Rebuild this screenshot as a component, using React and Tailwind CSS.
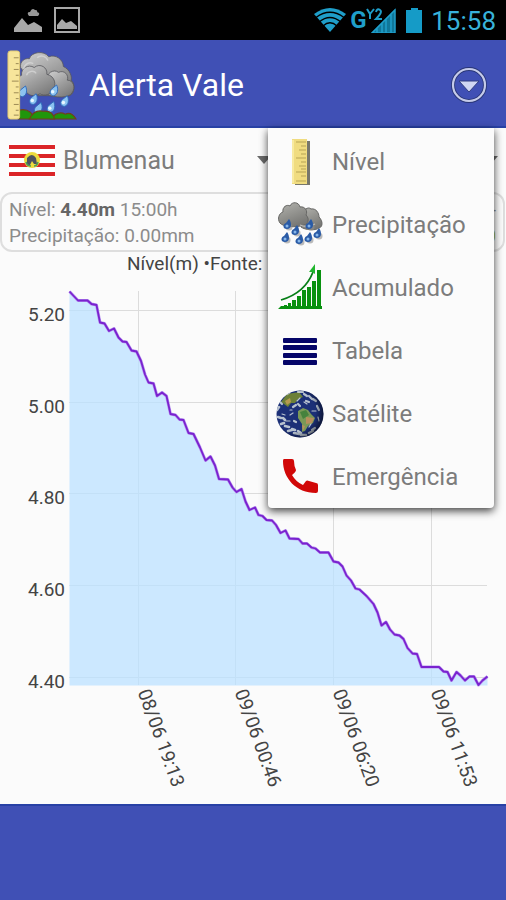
import React from 'react';

const LEVELS = [
  [69.5, 291.5], [78, 300.5], [87.5, 300.5], [91.5, 304], [96.5, 305], [100, 322.5], [104.5, 323.5], [109, 331],
  [114, 328.5], [118.5, 337.5], [122.5, 341.5], [126.5, 342], [131.5, 350.5], [136.5, 351.5], [141, 361],
  [145, 374.5], [148.5, 382.5], [153.5, 383.5], [157, 396], [162, 392.5], [166.5, 396], [170.5, 414], [175.5, 415],
  [179.5, 419.5], [183.5, 420], [188.5, 433], [193.5, 434], [200, 447.5], [205.5, 460.5], [210.5, 456.5],
  [215, 465.5], [219, 479], [228, 479.5], [232.5, 487.5], [236.5, 492], [241.5, 489], [245.5, 501.5], [249.5, 510],
  [255, 507.5], [258.5, 515], [262.5, 516], [266.5, 520], [272, 520.5], [276, 525], [280.5, 533], [285.5, 530.5],
  [289.5, 538.5], [298.5, 539], [302.5, 543.5], [307, 543.5], [311.5, 547.5], [315.5, 548.5], [320, 552.5],
  [328.5, 552.5], [333.5, 561.5], [338.5, 562.5], [342.5, 566.5], [346.5, 575.5], [351, 580.5], [355.5, 588.5],
  [359.5, 589.5], [366.5, 596], [373.5, 604], [377.5, 612.5], [381.5, 625.5], [386, 622], [390, 629.5],
  [394.5, 634.5], [399.5, 635.5], [403.5, 639], [407.5, 648], [412.5, 653.5], [417, 654], [421.5, 667], [439, 667],
  [443.5, 671.5], [447.5, 672], [451.5, 680.5], [456.5, 672], [460.5, 675.5], [465, 680.5], [469.5, 676.5],
  [474, 676.5], [478.5, 685], [482.5, 680.5], [487.5, 676.5],
];

const Y_TICKS = [[310.5, '5.20'], [402.5, '5.00'], [493.5, '4.80'], [585.5, '4.60'], [677.5, '4.40']];
const X_TICKS = [[138.5, '08/06 19:13'], [235.5, '09/06 00:46'], [333.5, '09/06 06:20'], [431.5, '09/06 11:53']];

function LevelChart() {
  const line = LEVELS.map((p) => p.join(',')).join(' ');
  return (
    <svg viewBox="0 277 506 527" className="block w-full" role="img" aria-label="Nível(m)">
      <g stroke="#dcdcdc" strokeWidth="1">
        {Y_TICKS.map(([y]) => <line key={y} x1="69" x2="487" y1={y} y2={y} />)}
        {X_TICKS.map(([x]) => <line key={x} x1={x} x2={x} y1="291" y2="685" />)}
      </g>
      <polygon points={`69.5,685.5 ${line} 487.5,685.5`} fill="#cce8ff" />
      <g stroke="#c3e0f7" strokeWidth="1">
        {Y_TICKS.map(([y], i) => <line key={y} x1="70" x2={[98, 168, 242, 353, 450][i]} y1={y} y2={y} />)}
        {X_TICKS.map(([x], i) => <line key={x} x1={x} x2={x} y1={[358, 493, 563, 669][i]} y2="685" />)}
      </g>
      <polyline points={line} fill="none" stroke="#b794f0" strokeWidth="3" strokeLinejoin="round" />
      <polyline points={line} fill="none" stroke="#7a22cf" strokeWidth="1.8" strokeLinejoin="round" />
      <g fill="#444" fontSize="19" fontFamily="Roboto, sans-serif">
        {Y_TICKS.map(([y, t]) => <text key={t} x="65" y={y + 10} textAnchor="end">{t}</text>)}
        {X_TICKS.map(([x, t]) => (
          <text key={t} transform={`translate(${x - 1} 692) rotate(70)`}>{t}</text>
        ))}
      </g>
    </svg>
  );
}

const DROP = 'M3 -6C5 -2 4.500 4 0 5C-4.500 5 -4.500 0 -2 -2Z';

function StormLogo() {
  return (
    <svg viewBox="0 0 72 72" className="h-[70px] w-[70px] shrink-0" aria-hidden="true">
      <defs>
        <linearGradient id="logoCloud" x1="0" y1="0" x2="0.700" y2="1">
          <stop offset="0" stopColor="#d2d2d2" />
          <stop offset="0.550" stopColor="#a0a0a0" />
          <stop offset="1" stopColor="#7c7c7c" />
        </linearGradient>
      </defs>
      <g fill="url(#logoCloud)" stroke="#55555a" strokeWidth="0.800">
        <path d="M14 18C13 12 18 8 23 9C25 2 38 0 43 7C50 4 58 10 58 17C65 20 67 28 66 31C71 36 69 47 63 47H32Z" />
        <path d="M41 31C40 24 48 19 53 23C59 20 64 26 62 31C68 31 71 38 67 44C64 50 49 49 42 46Z" />
        <path d="M12 38C9 32 12 27 15 26C14 19 22 14 28 18C34 13 42 18 41 25C50 27 51 37 47 40C46 46 38 48 34 45C27 49 21 46 20 43C16 45 12 42 12 38Z" />
      </g>
      <path d="M17 20C18 14 23 12 27 14M31 8C35 4 41 7 42 11M20 26C22 21 28 21 30 24" fill="none" stroke="#e0e0e0" strokeWidth="1.500" opacity="0.600" />
      <g fill="#8cc2f0" stroke="#2f6bbb" strokeWidth="1">
        {[[16, 43], [27, 51], [48, 42], [45, 59], [59, 53], [32, 60]].map(([x, y]) => (
          <path key={`${x}-${y}`} d={DROP} transform={`translate(${x} ${y})`} />
        ))}
      </g>
      <g fill="#e8f6ff">
        {[[26, 52], [47, 43], [44, 60], [58, 54]].map(([x, y]) => <circle key={x} cx={x} cy={y} r="1.800" />)}
      </g>
      <g fill="#20960b" stroke="#70411b" strokeWidth="1.200">
        <path d="M12 62Q19 60 24 64L30 71H12Z" />
        <path d="M45 71Q52 62 60 66Q66 63 71 71Z" />
        <path d="M23 71Q28 61 37 63Q47 62 49 71Z" />
      </g>
      <rect x="1" y="1" width="12" height="70" rx="2.500" fill="#f7e59b" stroke="#e0c873" />
      <path d="M7 8h5M9 14h3M7 20h5M9 26h3M5 32h7M9 38h3M7 44h5M9 50h3M7 56h5M9 62h3M7 67h5" stroke="#9a8753" strokeWidth="1" />
    </svg>
  );
}

function RulerIcon() {
  return (
    <svg viewBox="0 0 48 48" className="h-12 w-12" aria-hidden="true">
      <rect x="19" y="3" width="15" height="44" fill="#77776c" />
      <rect x="16" y="1" width="15" height="45" fill="#f0dc80" />
      <path d="M17 2v43" stroke="#f8eaa0" strokeWidth="2" />
      <path d="M20 4h10M25 8h5M23 12h7M25 16h5M20 20h10M25 24h5M23 28h7M25 31h5M20 34h10M25 38h5M20 43h10" stroke="#b7a455" strokeWidth="1" />
    </svg>
  );
}

const RAIN_DROPS = [[11, 24], [19, 30], [33, 24], [9, 37], [23, 39], [32, 37], [41, 33]];

function RainIcon() {
  return (
    <svg viewBox="0 0 48 48" className="h-12 w-12" aria-hidden="true">
      <defs>
        <linearGradient id="rainCloud" x1="0" y1="0" x2="0.500" y2="1">
          <stop offset="0" stopColor="#b3b3ae" />
          <stop offset="1" stopColor="#787875" />
        </linearGradient>
      </defs>
      <g fill="url(#rainCloud)" stroke="#666664" strokeWidth="1">
        <path d="M26 15C27 9 32 5 35 8C40 7 43 12 43 16C47 20 47 26 43 27C39 30 29 29 25 26Z" />
        <path d="M4 22C1 18 3 12 7 11C6 6 11 3 14 5C16 0 23 1 24 6C29 5 32 10 30 14C34 18 32 23 28 24C20 27 7 26 4 22Z" />
      </g>
      <path d="M24 24Q31 27 39 23" stroke="#c0c0bc" strokeWidth="1.200" fill="none" />
      <g fill="#8f8f8f" opacity="0.600">
        {RAIN_DROPS.map(([x, y]) => <circle key={`${x}-${y}`} cx={x + 2} cy={y + 2} r="3.500" />)}
      </g>
      <g fill="#2a5ba6">
        {RAIN_DROPS.map(([x, y]) => (
          <path key={`${x}-${y}`} d="M2 -6C5 -2 5 4 0 4C-5 4 -4 -1 -1 -2Z" transform={`translate(${x} ${y})`} />
        ))}
      </g>
      <g fill="#86b6ea">
        {RAIN_DROPS.map(([x, y]) => <circle key={`${x}-${y}`} cx={x} cy={y + 1} r="1.500" />)}
      </g>
    </svg>
  );
}

function GrowthIcon() {
  return (
    <svg viewBox="0 0 48 48" className="h-12 w-12" aria-hidden="true">
      <path d="M5 36Q29 29 37 8" fill="none" stroke="#087f18" strokeWidth="1.800" />
      <path d="M39 0L39 10L36 8L33 8Z" fill="#20b62e" />
      <path d="M5 42H46V45H2ZM8 41h3v3H8ZM12 39h3v5h-3ZM16 36h4v8h-4ZM21 32h4v12h-4ZM26 26h4v18h-4ZM31 23h4v21h-4ZM36 17h4v27h-4ZM41 6h4v38h-4Z" fill="#08910f" />
    </svg>
  );
}

function TableIcon() {
  return (
    <svg viewBox="0 0 48 48" className="h-12 w-12" aria-hidden="true">
      <g fill="#050568">
        {[11, 18, 26, 33].map((y) => <rect key={y} x="7" y={y} width="34" height="5" rx="1" />)}
      </g>
    </svg>
  );
}

function EarthIcon() {
  return (
    <svg viewBox="0 0 48 48" className="h-12 w-12" aria-hidden="true">
      <defs>
        <clipPath id="globe"><circle cx="24" cy="24" r="23.500" /></clipPath>
        <radialGradient id="shade" cx="0.400" cy="0.450" r="0.650">
          <stop offset="0.650" stopColor="#000" stopOpacity="0" />
          <stop offset="1" stopColor="#000" stopOpacity="0.700" />
        </radialGradient>
      </defs>
      <g clipPath="url(#globe)">
        <rect width="48" height="48" fill="#1d3177" />
        <path d="M5 12L11 4L23 2L27 7L22 9L19 13L15 13L12 17L8 14Z" fill="#6d8139" />
        <path d="M9 11L14 8L15 12L11 15Z" fill="#b79a50" />
        <path d="M22 21L27 18L32 20L35 24L39 28L37 33L32 36L29 41L26 42L26 34L22 28Z" fill="#7b9858" />
        <path d="M30 27L38 28L36 33L30 34Z M26 35L29 36L27 41Z" fill="#b88f5c" />
        <path d="M24 22L30 20L33 25L27 29Z" fill="#47833e" />
        <g fill="none" stroke="#d3dcdf" strokeLinecap="round" opacity="0.850">
          <path d="M1 20l2 -3M2 27l3 1M7 28l2 2M5 34l3 -1M9 36l4 1M12 41l4 -1M18 43l5 1M25 45l5 0M16 39l3 1M33 43l4 -2M22 41l3 2" strokeWidth="2.500" />
          <path d="M17 17l3 -2M22 14l2 2M28 4l3 2M33 6l3 3M37 9l3 2M41 16l2 4M11 4l3 -2M22 2l5 0M4 12l2 2M39 38l-3 2M18 31l2 1M30 11l3 1" strokeWidth="2.200" />
          <path d="M6 24l3 1M14 25l3 -2M10 31l4 0M28 12l3 2M36 21l4 0M21 11l3 -3M33 37l2 -3M42 27l1 4M14 20l2 0" strokeWidth="1.200" />
        </g>
        <circle cx="24" cy="24" r="24" fill="url(#shade)" />
      </g>
    </svg>
  );
}

function PhoneIcon() {
  return (
    <svg viewBox="0 0 48 48" className="h-12 w-12" aria-hidden="true">
      <path d="M8 6H16Q18 6 18 8Q18 13 20 17Q20 19 16 22Q20 29 27 32L30 28Q31 27 33 28L40 30Q42 30 42 32V38Q42 40 40 40C20 40 7 25 7 8Q7 6 8 6Z" fill="#d10808" />
    </svg>
  );
}

const MENU = [
  ['Nível', RulerIcon],
  ['Precipitação', RainIcon],
  ['Acumulado', GrowthIcon],
  ['Tabela', TableIcon],
  ['Satélite', EarthIcon],
  ['Emergência', PhoneIcon],
];

function OverflowMenu() {
  return (
    <nav className="absolute top-0 right-3 z-10 w-[226px] rounded-b-sm bg-[#fbfbfb] pt-0.5 shadow-[0_3px_9px_rgba(0,0,0,0.75)]">
      {MENU.map(([label, Icon]) => (
        <button key={label} type="button" className="flex h-[63px] w-full items-center gap-2 pl-2 text-left text-2xl text-[#7c7c7c]">
          <Icon />
          <span>{label}</span>
        </button>
      ))}
    </nav>
  );
}

function Flag() {
  return (
    <svg viewBox="0 0 46 33" className="h-[33px] w-[46px] shrink-0" aria-hidden="true">
      <rect width="46" height="33" fill="#fff" />
      <path d="M0 1h46v4H0ZM0 10h46v4H0ZM0 19h46v4H0ZM0 28h46v4H0Z" fill="#db2528" />
      <circle cx="23" cy="16" r="8" fill="#eddc3e" />
      <path d="M18 14q5 -6 9 0l1 6h-3l-2 -3l-2 4h-3Z" fill="#4d5360" />
      <path d="M17 18q1 4 5 4M29 18q-1 4 -4 4" fill="none" stroke="#4d9a59" strokeWidth="1.500" />
    </svg>
  );
}

function Caret() {
  return (
    <svg viewBox="0 0 14 8" className="h-2 w-3.5 shrink-0" aria-hidden="true">
      <path d="M0 0H14L7 8Z" fill="#6a6a6a" />
    </svg>
  );
}

function StatusBar() {
  return (
    <div className="flex h-10 items-center justify-between bg-black pr-2.5 pl-3.5">
      <div className="flex items-center gap-3">
        <svg viewBox="0 0 28 24" className="h-6 w-7" aria-hidden="true">
          <path d="M0 24V20L8 10L14 17L20 14L28 19V24Z" fill="#a8a8a8" />
          <path d="M15 8Q12 4 16 4Q18 -1 21 2Q24 2 23 4Q27 5 24 8Z" fill="#999" />
        </svg>
        <svg viewBox="0 0 26 26" className="h-[26px] w-[26px]" aria-hidden="true">
          <rect x="1" y="1" width="24" height="24" fill="none" stroke="#a8a8a8" strokeWidth="2" />
          <path d="M3 22V18L8 12L12 16L17 14L23 19V22Z" fill="#a8a8a8" />
        </svg>
      </div>
      <div className="flex items-center text-[#1f9fca]">
        <svg viewBox="0 0 32 24" className="h-6 w-8" aria-hidden="true">
          <path d="M0 6Q16 -6 32 6L16 24Z" fill="currentColor" />
          <g fill="none" stroke="#000" strokeWidth="1.300">
            <path d="M2 9.500Q16 -1 30 9.500" />
            <path d="M5 14Q16 5 27 14" />
            <path d="M9 18Q16 11.500 23 18" />
          </g>
        </svg>
        <span className="ml-1 w-4 text-2xl leading-6 font-bold">G</span>
        <svg viewBox="0 0 30 25" className="h-[25px] w-[30px]" aria-hidden="true">
          <path d="M1 1L4 6V11M8 1L4 6M10 4Q11 0 14 2Q17 4 10 11H16" fill="none" stroke="currentColor" strokeWidth="2" />
          <path d="M5 25L29 1V25Z" fill="#107799" />
          <path d="M7 24L29 2V25H6ZM11 20V25M16 15V25M20 11V25M25 6V25" fill="none" stroke="currentColor" strokeWidth="1.500" />
        </svg>
        <svg viewBox="0 0 17 25" className="ml-2.5 h-[25px] w-[17px]" aria-hidden="true">
          <path d="M5 0H12V2H16V25H0V2H5Z" fill="#159bc7" />
        </svg>
        <span className="ml-2 pt-0.5 text-[26px] leading-8 text-[#38b2da]">15:58</span>
      </div>
    </div>
  );
}

export default function App() {
  return (
    <div className="flex min-h-screen flex-col bg-[#4050b5] font-[Roboto,sans-serif]">
      <StatusBar />
      <header className="flex h-[88px] items-center gap-3 border-b-2 border-[#2841a5] bg-[#4050b5] pt-1 pr-[19px] pl-[7px]">
        <StormLogo />
        <h1 className="flex-1 text-[32px] text-white">Alerta Vale</h1>
        <button type="button" aria-label="Menu" className="h-9 w-9">
          <svg viewBox="0 0 36 36" className="h-9 w-9" aria-hidden="true">
            <circle cx="18" cy="18" r="16" fill="none" stroke="#293677" strokeWidth="4" />
            <circle cx="18" cy="18" r="16" fill="none" stroke="#c5cbea" strokeWidth="2.200" />
            <path d="M8 14H28L18 25Z" fill="#d0d6f3" stroke="#303d80" strokeWidth="1" />
          </svg>
        </button>
      </header>

      <main className="relative bg-[#fbfbfb]">
        <div className="grid h-16 grid-cols-2">
          <div className="flex items-center gap-2 pl-[9px]">
            <Flag />
            <div className="relative flex min-w-0 flex-1 items-center">
              <select aria-label="Cidade" className="w-full appearance-none bg-transparent pt-0.5 text-[25px] text-[#7c7c7c] outline-none">
                <option>Blumenau</option>
              </select>
              <span className="pointer-events-none absolute -right-[18px]"><Caret /></span>
            </div>
          </div>
          <button type="button" aria-label="Período" className="flex items-center justify-end pr-2"><Caret /></button>
        </div>

        <section className="mr-px flex h-[60px] items-center justify-between rounded-xl border-2 border-[#dedede] px-[7px] pt-0.5 text-[19px] leading-[26px] text-[#8c8c8c]">
          <div>
            <p>Nível: <b className="text-[#666]">4.40m</b> 15:00h</p>
            <p>Precipitação: 0.00mm</p>
          </div>
          <div className="text-right">
            <p>-</p>
            <p className="text-[#a9bd22]">0</p>
          </div>
        </section>

        <h2 className="h-[25px] pl-[127px] text-[19px] leading-6 text-[#444]">Nível(m) •Fonte:</h2>
        <LevelChart />
        <OverflowMenu />
      </main>
      <footer className="flex-1 border-t-2 border-[#2841a5] bg-[#4050b5]" />
    </div>
  );
}
